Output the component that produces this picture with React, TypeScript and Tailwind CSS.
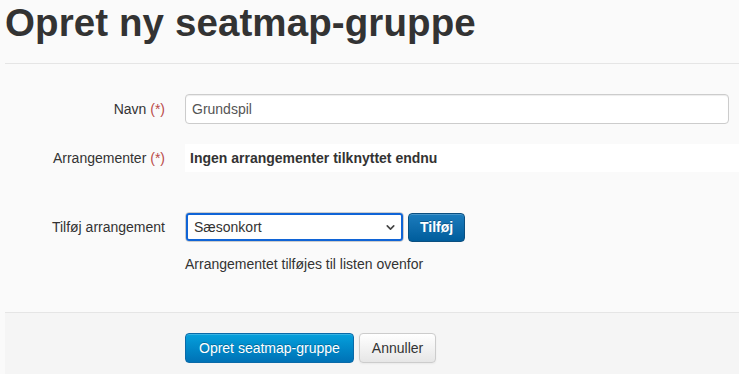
import { ChevronDown } from "lucide-react";

export default function App() {
  return (
    <div className="min-h-screen bg-[#fafafa] font-['Liberation_Sans',Arial,sans-serif] text-[14px] text-[#333]">
      <div className="pl-[5px]">
        <h1 className="pt-[3px] text-[38.5px] font-bold leading-[40px] tracking-[0.1px] text-[#333]">
          Opret ny seatmap-gruppe
        </h1>
        <div className="mt-[20px] border-t border-[#e5e5e5]" />

        {/* Navn */}
        <div className="mt-[30px] flex h-[30px] items-center pr-[10px]">
          <label className="w-[160px] text-right leading-[20px]">
            Navn <span className="text-[#b94a48]">(*)</span>
          </label>
          <input
            defaultValue="Grundspil"
            className="ml-[20px] h-[30px] flex-1 rounded-[4px] border border-[#ccc] bg-white px-[6px] text-[14px] text-[#555] shadow-[inset_0_1px_1px_rgba(0,0,0,0.075)] outline-none"
          />
        </div>

        {/* Arrangementer */}
        <div className="mt-[20px] flex h-[28px] items-center">
          <label className="w-[160px] text-right leading-[20px]">
            Arrangementer <span className="text-[#b94a48]">(*)</span>
          </label>
          <div className="ml-[20px] flex h-[28px] flex-1 items-center bg-white pl-[5px] font-bold text-[#333]">
            Ingen arrangementer tilknyttet endnu
          </div>
        </div>

        {/* Tilføj arrangement */}
        <div className="mt-[40px] flex h-[30px] items-center">
          <label className="w-[160px] text-right leading-[20px]">Tilføj arrangement</label>
          <div className="ml-[20px] flex items-center gap-[4px]">
            <div className="relative flex h-[30px] w-[219px] items-center rounded-[4px] border border-[#ccc] bg-white">
              <div className="flex h-[28px] w-[217px] items-center rounded-[3px] border-2 border-[#1064d6] pl-[6px] text-[#333]">
                Sæsonkort
              </div>
              <ChevronDown className="absolute right-[6px] top-[8px] h-[13px] w-[13px] text-[#444]" strokeWidth={3} />
            </div>
            <button className="h-[29px] rounded-[4px] border border-[#0b4f80] bg-gradient-to-b from-[#1b7cbd] to-[#005d9c] px-[11px] font-bold text-white shadow-[inset_0_1px_0_rgba(255,255,255,0.2)] [text-shadow:0_-1px_0_rgba(0,0,0,0.25)]">
              Tilføj
            </button>
          </div>
        </div>
        <p className="ml-[180px] mt-[12px] leading-[20px] text-[#333]">Arrangementet tilføjes til listen ovenfor</p>
      </div>

      {/* Form actions */}
      <div className="ml-[5px] mt-[38px] h-[62px] border-t border-[#e5e5e5] bg-[#f5f5f5] pl-[180px] pt-[20px]">
        <div className="flex items-center gap-[5px]">
          <button className="h-[30px] rounded-[4px] border border-[#0a6aa8] bg-gradient-to-b from-[#06a0dc] to-[#0072b6] px-[13px] text-white shadow-[inset_0_1px_0_rgba(255,255,255,0.2)] [text-shadow:0_-1px_0_rgba(0,0,0,0.25)]">
            Opret seatmap-gruppe
          </button>
          <button className="h-[30px] rounded-[4px] border border-[#ccc] bg-gradient-to-b from-white to-[#e6e6e6] px-[12px] text-[#333] shadow-[inset_0_1px_0_rgba(255,255,255,0.2),0_1px_2px_rgba(0,0,0,0.05)]">
            Annuller
          </button>
        </div>
      </div>
    </div>
  );
}
